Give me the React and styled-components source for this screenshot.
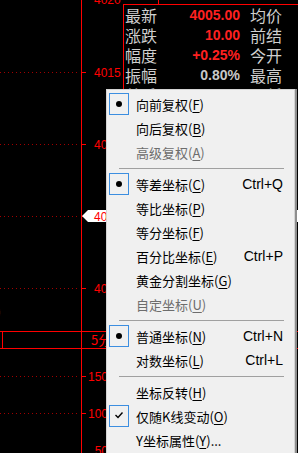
import React from 'react'
import styled, { createGlobalStyle } from 'styled-components'

const GlobalStyle = createGlobalStyle`
  html, body {
    margin: 0;
    padding: 0;
    background: #000;
  }
  body {
    overflow: hidden;
  }
`;

const Screen = styled.div`
  position: relative;
  width: 298px;
  height: 453px;
  background: #000;
  overflow: hidden;
  font-family: "Noto Sans CJK SC", sans-serif;
`;

const Chart = styled.svg`
  position: absolute;
  left: 0;
  top: 0;
  width: 298px;
  height: 453px;
  font-family: "Liberation Sans", Arial, sans-serif;
  font-size: 12px;
`;

const InfoPanel = styled.div`
  position: absolute;
  left: 123px;
  top: 4px;
  right: 0;
  border-top: 1px solid #ff0000;
  border-left: 1px solid #ff0000;
  padding-left: 1px;
`;

const InfoRow = styled.div`
  display: grid;
  grid-template-columns: 32px 83px 1fr;
  height: 20px;
  line-height: 20px;
  font-size: 16px;
  color: #cfcfcf;
  white-space: nowrap;
`;

const InfoValue = styled.span`
  text-align: right;
  font-family: "Liberation Sans", Arial, sans-serif;
  font-weight: bold;
  font-size: 14px;
  color: ${props => props.$tone};
`;

const InfoSide = styled.span`
  padding-left: 10px;
`;

const Menu = styled.div`
  position: absolute;
  left: 106px;
  top: 89px;
  width: 189px;
  box-sizing: border-box;
  padding: 2px 0 4px;
  background: #f0f0f0;
  border: 1px solid #d4d4d4;
  box-shadow: 2px 0 0 #8e8e8e;
  font-family: "Noto Sans CJK SC", "Microsoft YaHei", sans-serif;
  font-size: 13px;
  color: #000;
`;

const MenuItem = styled.div`
  display: flex;
  align-items: center;
  height: 24px;
  padding: 0 11px 0 2px;
  color: ${props => props.$disabled ? '#6d6d6d' : '#000'};
  white-space: nowrap;
`;

const CheckBox = styled.span`
  display: flex;
  align-items: center;
  justify-content: center;
  width: 20px;
  height: 22px;
  box-sizing: border-box;
  margin-right: 7px;
  border: 1px solid ${props => props.$on ? '#3c8ee0' : 'transparent'};
`;

const Bullet = styled.span`
  width: 6px;
  height: 6px;
  border-radius: 50%;
  background: #000;
`;

const ItemLabel = styled.span`
  flex: 1;
  u {
    text-underline-offset: 2px;
  }
`;

const Shortcut = styled.span`
  font-family: "Liberation Sans", Arial, sans-serif;
  font-size: 14px;
`;

const Separator = styled.div`
  height: 8px;
  display: flex;
  align-items: center;
  padding: 0 10px 0 12px;
  &::after {
    content: "";
    flex: 1;
    border-top: 1px solid #a0a0a0;
  }
`;

const infoRows = [
  { label: '最新', value: '4005.00', tone: '#ff2020', side: '均价' },
  { label: '涨跌', value: '10.00', tone: '#ff2020', side: '前结' },
  { label: '幅度', value: '+0.25%', tone: '#ff2020', side: '今开' },
  { label: '振幅', value: '0.80%', tone: '#c8c8c8', side: '最高' },
  { label: '总手', value: '', tone: '#c8c8c8', side: '最低' },
];

const menuItems = [
  { text: '向前复权', key: 'F', mark: 'bullet' },
  { text: '向后复权', key: 'B' },
  { text: '高级复权', key: 'A', disabled: true },
  'sep',
  { text: '等差坐标', key: 'C', mark: 'bullet', shortcut: 'Ctrl+Q' },
  { text: '等比坐标', key: 'P' },
  { text: '等分坐标', key: 'F' },
  { text: '百分比坐标', key: 'E', shortcut: 'Ctrl+P' },
  { text: '黄金分割坐标', key: 'G' },
  { text: '自定坐标', key: 'U', disabled: true },
  'sep',
  { text: '普通坐标', key: 'N', mark: 'bullet', shortcut: 'Ctrl+N' },
  { text: '对数坐标', key: 'L', shortcut: 'Ctrl+L' },
  'sep',
  { text: '坐标反转', key: 'H' },
  { text: '仅随K线变动', key: 'O', mark: 'check' },
  { text: 'Y坐标属性', key: 'Y', tail: '...' },
];

const gridLines = [72, 144, 216, 288, 376, 413];

const axisLabels = [
  { y: -1, text: '4020', x: 94, anchor: 'start' },
  { y: 72, text: '4015', x: 94, anchor: 'start' },
  { y: 144, text: '4010', x: 94, anchor: 'start' },
  { y: 288, text: '4000', x: 94, anchor: 'start' },
  { y: 376, text: '150', x: 108, anchor: 'end' },
  { y: 413, text: '100', x: 108, anchor: 'end' },
  { y: 450, text: '50', x: 108, anchor: 'end' },
];

const Mark = ({ type }) => {
  if (type === 'bullet') return <Bullet />;
  if (type === 'check') {
    return (
      <svg width="18" height="20" viewBox="0 0 18 20">
        <polyline points="5.5,9 8,11.5 12.5,6.5" fill="none" stroke="#000" strokeWidth="1.4" />
      </svg>
    );
  }
  return null;
};

const App = () => {
  return (
    <Screen>
      <GlobalStyle />
      <Chart viewBox="0 0 298 453">
        <line x1="81.5" y1="0" x2="81.5" y2="453" stroke="#ff0000" />
        <line x1="158.5" y1="0" x2="158.5" y2="4" stroke="#ff0000" />
        {gridLines.map(y => (
          <g key={y}>
            <line x1="0" y1={y + 0.5} x2="80" y2={y + 0.5} stroke="#a00000" strokeDasharray="1 3" />
            <line x1="81" y1={y + 0.5} x2="86" y2={y + 0.5} stroke="#ff0000" />
          </g>
        ))}
        {axisLabels.map(l => (
          <text key={l.text} x={l.x} y={l.y + 4.5} fill="#ff0000" textAnchor={l.anchor}>{l.text}</text>
        ))}
        <polygon points="82,216 88,210 298,210 298,222 88,222" fill="#ffffff" />
        <text x="94" y="220.5" fill="#ff0000">4005</text>
        <line x1="0" y1="331.5" x2="298" y2="331.5" stroke="#ff0000" />
        <line x1="0" y1="348.5" x2="298" y2="348.5" stroke="#ff0000" />
        <line x1="2.5" y1="332" x2="2.5" y2="348" stroke="#ff0000" />
        <text x="91" y="345" fill="#ff0000" fontSize="13" fontFamily='"Noto Sans CJK SC", sans-serif'>5分</text>
        <text x="-4" y="317" fill="#cfcfcf" fontSize="15" fontFamily='"Noto Sans CJK SC", sans-serif'>)</text>
      </Chart>

      <InfoPanel>
        {infoRows.map(r => (
          <InfoRow key={r.label}>
            <span>{r.label}</span>
            <InfoValue $tone={r.tone}>{r.value}</InfoValue>
            <InfoSide>{r.side}</InfoSide>
          </InfoRow>
        ))}
      </InfoPanel>

      <Menu>
        {menuItems.map((item, i) => {
          if (item === 'sep') return <Separator key={i} />;
          return (
            <MenuItem key={i} $disabled={item.disabled}>
              <CheckBox $on={!!item.mark}>
                <Mark type={item.mark} />
              </CheckBox>
              <ItemLabel>
                {item.text}(<u>{item.key}</u>){item.tail}
              </ItemLabel>
              {item.shortcut && <Shortcut>{item.shortcut}</Shortcut>}
            </MenuItem>
          );
        })}
      </Menu>
    </Screen>
  )
}

export default App
